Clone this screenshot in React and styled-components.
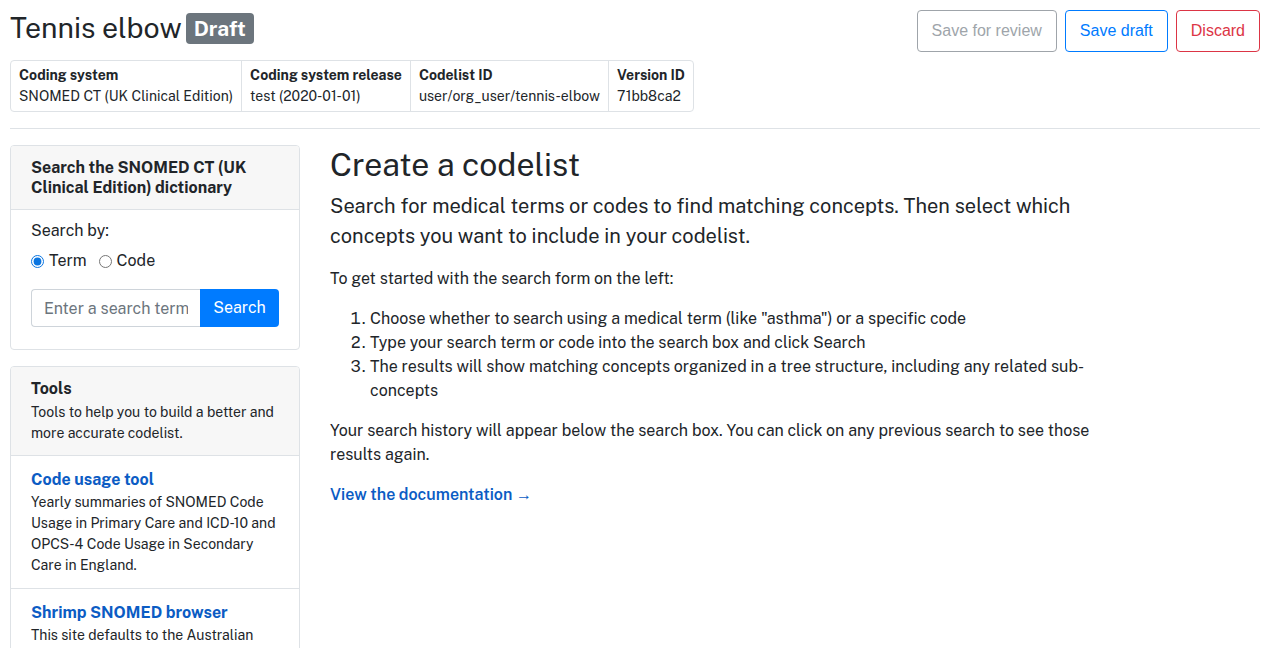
import styled, { createGlobalStyle } from "styled-components";

const GlobalStyle = createGlobalStyle`
  * { box-sizing: border-box; }
  body {
    margin: 0;
    font-family: "Public Sans", Roboto, "Liberation Sans", sans-serif;
    font-size: 16px;
    line-height: 1.5;
    color: #212529;
    background: #fff;
  }
  a { color: #0b5cc4; text-decoration: none; }
`;

const Page = styled.div`
  padding: 10px 10px 0;
`;

const TopBar = styled.div`
  display: flex;
  justify-content: space-between;
  align-items: flex-start;
`;

const TitleBlock = styled.div`
  display: flex;
  flex-direction: column;
  gap: 8px;
`;

const Title = styled.h1`
  margin: 0;
  font-size: 28.5px;
  font-weight: 400;
  line-height: 36px;
  height: 42px;
  display: flex;
  align-items: center;
  gap: 4px;
  padding-bottom: 6px;
`;

const Badge = styled.span`
  background: #6c757d;
  color: #fff;
  font-size: 21px;
  font-weight: 700;
  line-height: 31px;
  padding: 0 8px;
  border-radius: 4px;
`;

const Actions = styled.div`
  display: flex;
  gap: 8px;
`;

const ActionButton = styled.button`
  font-family: "Liberation Sans", Arial, sans-serif;
  font-size: 16px;
  line-height: 24px;
  padding: 8px 14px;
  background: #fff;
  border: 1px solid ${(p) => p.$color};
  color: ${(p) => p.$color};
  border-radius: 4px;
  opacity: ${(p) => (p.disabled ? 0.65 : 1)};
`;

const MetaTable = styled.div`
  display: flex;
  align-self: flex-start;
  border: 1px solid #dee2e6;
  border-radius: 4px;
  font-size: 14px;
  line-height: 21px;
`;

const MetaCell = styled.div`
  padding: 4px 8px;
  & + & { border-left: 1px solid #dee2e6; }
  dt { font-weight: 700; margin: 0; }
  dd { margin: 0; }
`;

const Rule = styled.hr`
  border: 0;
  border-top: 1px solid #dee2e6;
  margin: 16px 0;
`;

const Body = styled.div`
  display: flex;
  gap: 30px;
  align-items: flex-start;
`;

const Sidebar = styled.aside`
  width: 290px;
  flex-shrink: 0;
  display: flex;
  flex-direction: column;
  gap: 16px;
`;

const Card = styled.div`
  border: 1px solid #dee2e6;
  border-radius: 4px;
  overflow: hidden;
`;

const CardHeader = styled.div`
  background: #f7f7f7;
  padding: 12px 20px 11px;
  border-bottom: 1px solid #dee2e6;
  h2 {
    margin: 0;
    font-size: 16px;
    font-weight: 700;
    line-height: 20px;
  }
  p {
    margin: 3px 0 0;
    font-size: 14px;
    line-height: 21px;
  }
`;

const CardBody = styled.div`
  padding: 9px 20px 22px;
`;

const Label = styled.div`
  line-height: 24px;
`;

const RadioRow = styled.div`
  display: flex;
  gap: 12px;
  margin-top: 6px;
  label {
    display: flex;
    align-items: center;
    gap: 5px;
  }
  input { margin: 0; width: 13px; height: 13px; accent-color: #0b75e0; }
`;

const SearchGroup = styled.div`
  display: flex;
  margin-top: 16px;
`;

const SearchInput = styled.input`
  width: 169px;
  height: 38px;
  border: 1px solid #ced4da;
  border-right: 0;
  border-radius: 4px 0 0 4px;
  padding: 6px 12px;
  font: inherit;
  &::placeholder { color: #6c757d; }
`;

const SearchButton = styled.button`
  height: 38px;
  width: 79px;
  background: #007bff;
  color: #fff;
  border: 0;
  border-radius: 0 4px 4px 0;
  font: inherit;
`;

const ToolItem = styled.div`
  padding: 11px 20px 12px;
  & + & { border-top: 1px solid #dee2e6; }
  a {
    display: block;
    font-weight: 700;
    line-height: 25px;
  }
  p {
    margin: 0;
    font-size: 14px;
    line-height: 21px;
  }
`;

const Main = styled.main`
  max-width: 790px;
`;

const Heading = styled.h2`
  margin: 0 0 6px;
  font-size: 32px;
  font-weight: 400;
  line-height: 40px;
`;

const Lead = styled.p`
  margin: 0 0 16px;
  font-size: 20px;
  line-height: 30px;
`;

const Para = styled.p`
  margin: 0 0 16px;
`;

const Steps = styled.ol`
  margin: 0 0 16px;
  padding-left: 40px;
`;

const DocLink = styled.a`
  font-weight: 600;
`;

const meta = [
  ["Coding system", "SNOMED CT (UK Clinical Edition)"],
  ["Coding system release", "test (2020-01-01)"],
  ["Codelist ID", "user/org_user/tennis-elbow"],
  ["Version ID", "71bb8ca2"],
];

const tools = [
  {
    name: "Code usage tool",
    text: "Yearly summaries of SNOMED Code Usage in Primary Care and ICD-10 and OPCS-4 Code Usage in Secondary Care in England.",
  },
  {
    name: "Shrimp SNOMED browser",
    text: "This site defaults to the Australian edition of SNOMED CT.",
  },
];

export default function App() {
  return (
    <Page>
      <GlobalStyle />
      <TopBar>
        <TitleBlock>
          <Title>
            Tennis elbow <Badge>Draft</Badge>
          </Title>
          <MetaTable>
            {meta.map(([k, v]) => (
              <MetaCell key={k}>
                <dt>{k}</dt>
                <dd>{v}</dd>
              </MetaCell>
            ))}
          </MetaTable>
        </TitleBlock>
        <Actions>
          <ActionButton $color="#6c757d" disabled>
            Save for review
          </ActionButton>
          <ActionButton $color="#007bff">Save draft</ActionButton>
          <ActionButton $color="#dc3545">Discard</ActionButton>
        </Actions>
      </TopBar>

      <Rule />

      <Body>
        <Sidebar>
          <Card>
            <CardHeader>
              <h2>Search the SNOMED CT (UK Clinical Edition) dictionary</h2>
            </CardHeader>
            <CardBody>
              <Label>Search by:</Label>
              <RadioRow>
                <label>
                  <input type="radio" name="by" defaultChecked /> Term
                </label>
                <label>
                  <input type="radio" name="by" /> Code
                </label>
              </RadioRow>
              <SearchGroup>
                <SearchInput placeholder="Enter a search term" />
                <SearchButton>Search</SearchButton>
              </SearchGroup>
            </CardBody>
          </Card>

          <Card>
            <CardHeader>
              <h2>Tools</h2>
              <p>Tools to help you to build a better and more accurate codelist.</p>
            </CardHeader>
            {tools.map((t) => (
              <ToolItem key={t.name}>
                <a href="#">{t.name}</a>
                <p>{t.text}</p>
              </ToolItem>
            ))}
          </Card>
        </Sidebar>

        <Main>
          <Heading>Create a codelist</Heading>
          <Lead>
            Search for medical terms or codes to find matching concepts. Then
            select which concepts you want to include in your codelist.
          </Lead>
          <Para>To get started with the search form on the left:</Para>
          <Steps>
            <li>
              Choose whether to search using a medical term (like "asthma") or a
              specific code
            </li>
            <li>Type your search term or code into the search box and click Search</li>
            <li>
              The results will show matching concepts organized in a tree
              structure, including any related sub-concepts
            </li>
          </Steps>
          <Para>
            Your search history will appear below the search box. You can click
            on any previous search to see those results again.
          </Para>
          <DocLink href="#">View the documentation →</DocLink>
        </Main>
      </Body>
    </Page>
  );
}
